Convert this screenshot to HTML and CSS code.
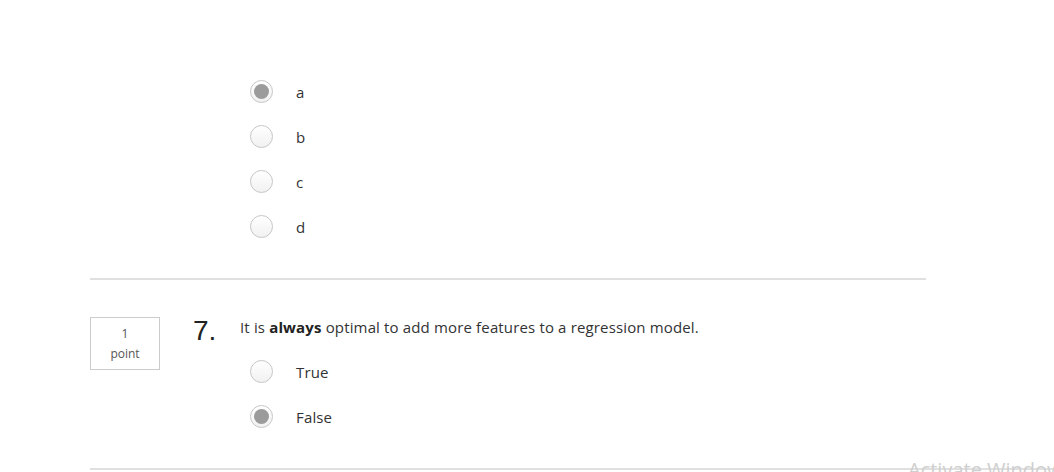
FILE: index.html
```html
<!DOCTYPE html>
<html>
<head>
<meta charset="utf-8">
<link rel="stylesheet" href="styles.css">
</head>
<body>
<div class="page">
  <div class="question-tail">
    <div class="options">
      <label class="option"><span class="radio checked"></span><span class="opt-text">a</span></label>
      <label class="option"><span class="radio"></span><span class="opt-text">b</span></label>
      <label class="option"><span class="radio"></span><span class="opt-text">c</span></label>
      <label class="option"><span class="radio"></span><span class="opt-text">d</span></label>
    </div>
  </div>
  <hr class="divider">
  <div class="question">
    <div class="points"><span>1</span><span>point</span></div>
    <div class="qnum">7.</div>
    <div class="qbody">
      <p class="qtext">It is <strong>always</strong> optimal to add more features to a regression model.</p>
      <div class="options">
        <label class="option"><span class="radio"></span><span class="opt-text">True</span></label>
        <label class="option"><span class="radio checked"></span><span class="opt-text">False</span></label>
      </div>
    </div>
  </div>
  <hr class="divider bottom">
</div>
<div class="watermark">Activate Windows</div>
</body>
</html>
```
FILE: styles.css
```css
html, body {
  margin: 0;
  padding: 0;
  background: #fff;
  overflow: hidden;
}
body {
  width: 1054px;
  height: 472px;
  font-family: "Open Sans", "Liberation Sans", sans-serif;
  color: #333;
  position: relative;
}
.page {
  padding-left: 90px;
  width: 836px;
}
.question-tail {
  padding-top: 69px;
  padding-left: 160px;
}
.options {
  display: flex;
  flex-direction: column;
}
.option {
  display: flex;
  align-items: center;
  height: 45px;
  font-size: 15px;
  letter-spacing: 0.15px;
}
.radio {
  box-sizing: border-box;
  width: 23px;
  height: 23px;
  border-radius: 50%;
  border: 1px solid #c6c6c6;
  background: linear-gradient(#ffffff, #f1f1f1);
  margin-right: 23px;
  flex-shrink: 0;
  display: flex;
  align-items: center;
  justify-content: center;
}
.radio.checked::after {
  content: "";
  width: 15px;
  height: 15px;
  border-radius: 50%;
  background: #9b9b9b;
}
.opt-text {
  color: #333;
}
.divider {
  border: 0;
  height: 2px;
  background: #e0e0e0;
  margin: 29px 0 0 0;
}
.question {
  display: flex;
  align-items: flex-start;
  margin-top: 37px;
}
.points {
  box-sizing: border-box;
  width: 70px;
  height: 53px;
  border: 1px solid #cccccc;
  display: flex;
  flex-direction: column;
  align-items: center;
  justify-content: center;
  padding-top: 1px;
  font-size: 12px;
  line-height: 20px;
  color: #555;
}
.qnum {
  width: 47px;
  margin-left: 33px;
  font-family: "Liberation Sans", Arial, sans-serif;
  font-size: 28px;
  line-height: 28px;
  color: #222;
}
.qbody {
  padding-left: 10px;
}
.qtext {
  margin: 0 0 12px -10px;
  font-size: 15px;
  letter-spacing: 0.15px;
  line-height: 20px;
  color: #333;
}
.qtext strong {
  font-weight: 700;
  color: #222;
}
.divider.bottom {
  margin-top: 29px;
  width: 964px;
}
.watermark {
  position: absolute;
  left: 908px;
  top: 456px;
  font-family: "Open Sans", sans-serif;
  font-size: 20px;
  color: #cfcfcf;
  white-space: nowrap;
}
```
